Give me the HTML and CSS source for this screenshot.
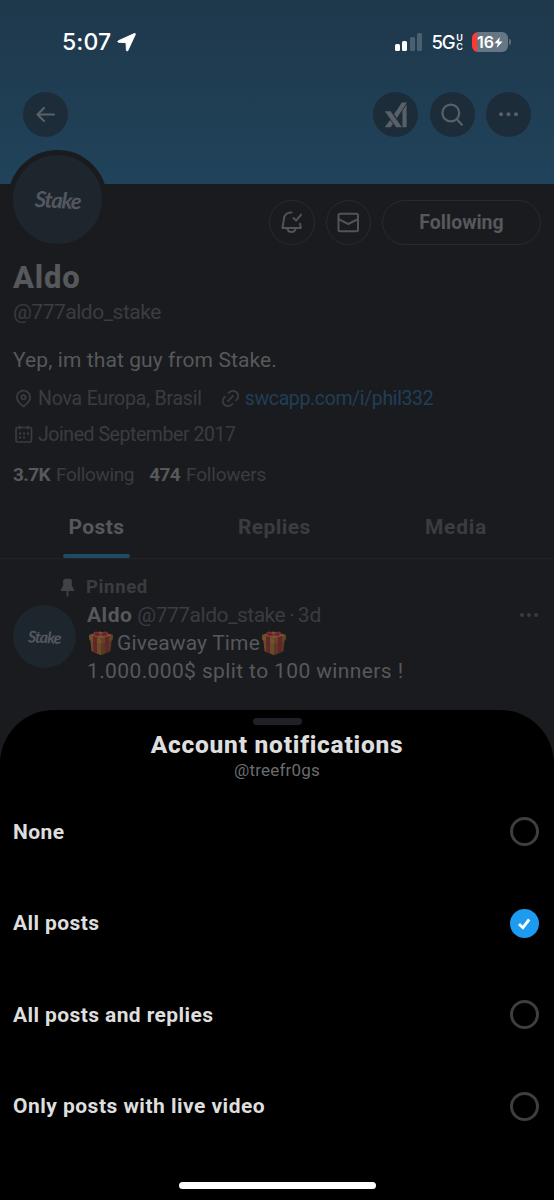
FILE: index.html
```html
<!DOCTYPE html>
<html lang="en">
<head>
<meta charset="utf-8">
<title>Account notifications</title>
<link rel="stylesheet" href="styles.css">
</head>
<body>
<svg class="defs" width="0" height="0">
  <symbol id="gift" viewBox="0 0 26 26">
    <path d="M2.200 9.500 13 13v12.300L3.600 21.200z" fill="#69492a"/>
    <path d="M23.800 9.500 13 13v12.300l9.400-4.100z" fill="#59391f"/>
    <path d="M.8 5 13 8.800V14L1.400 10z" fill="#75502b"/>
    <path d="M25.200 5 13 8.800V14l11.600-4z" fill="#664326"/>
    <path d="M.8 5 12 1.600 25.200 5 13 8.800z" fill="#7b572f"/>
    <path d="m5 6.300 4 1.300v15.800l-3.600-1.500zM21 6.300l-4 1.300v15.800l3.600-1.500z" fill="#61252a"/>
    <path d="M12.500 5.500C9 7.600 5.500 6.200 5.200 4 5 1.600 9.500 0 12.500 4.200 15.500 0 20.500 1.200 20.300 3.800c-.3 2.400-4 3.600-7.800 1.700z" fill="#782e35"/>
    <path d="m7.500 3.800 3 .8M18 3.500l-3 1" stroke="#4c2024" stroke-width="1.300"/>
  </symbol>
</svg>
<main class="screen">
  <header class="banner">
    <div class="status">
      <div class="clock">
        <span class="time">5:07</span>
        <svg class="nav-arrow" viewBox="0 0 20 20"><path d="M18.300.6 1.600 8.100c-1.200.6-1 1.600.3 1.700l7.600.3.400 7.800c.1 1.300 1.200 1.400 1.700.2L19.200 1.700c.4-.9-.1-1.400-.9-1.100z" fill="#fff" stroke="#fff"/></svg>
      </div>
      <div class="indicators">
        <div class="signal"><i class="b1"></i><i class="b2"></i><i class="b3"></i><i class="b4"></i></div>
        <div class="network"><span class="gen">5G</span><span class="uc"><span>U</span><span>C</span></span></div>
        <div class="battery"><span class="level">16</span><svg viewBox="0 0 10 14" width="9" height="13"><path d="M6.600.8.5 7.800h3.700L3 13.200l6.500-7.400H5.600z" fill="#fff"/></svg></div>
        <i class="battery-cap"></i>
      </div>
    </div>
    <nav class="nav">
      <span class="round"><svg width="45" height="45" viewBox="0 0 45 45" class="line"><path d="M31 22.500H14.500M21 16l-6.500 6.500L21 29"/></svg></span>
      <span class="round push"><svg width="45" height="45" viewBox="0 0 45 45" fill="#596068"><path d="M11.800 19.200h5.700l11.500 16h-5.700zM11.800 35.200l5.300-7.200 2.900 4-2.400 3.200zM21 22.300 28.900 10.500h5L23.900 26zM29.500 18.500l4.100-6v22.700h-4.100z"/></svg></span>
      <span class="round"><svg width="45" height="45" viewBox="0 0 45 45" class="line"><circle cx="20.800" cy="21" r="8.400"/><path d="m26.900 27.200 5 5.500"/></svg></span>
      <span class="round"><svg width="45" height="45" viewBox="0 0 45 45" fill="#596068"><circle cx="15" cy="22.300" r="2"/><circle cx="22.500" cy="22.300" r="2"/><circle cx="30" cy="22.300" r="2"/></svg></span>
    </nav>
  </header>

  <section class="profile">
    <div class="profile-top">
      <div class="avatar"><span class="logo">Stake</span></div>
      <div class="actions">
        <span class="outline"><svg width="43" height="43" viewBox="0 0 43 43" class="line soft"><path d="M21.500 11.500c-4-.4-7.300 2.600-7.600 6.300l-1.400 9.200h18.300l-.8-4.200M17.300 27.200c.4 5.200 7.900 5.200 8.300 0M23.500 17l2.600 2.600 5-6"/></svg></span>
        <span class="outline"><svg width="43" height="43" viewBox="0 0 43 43" class="line soft"><rect x="11.500" y="12.700" width="19.500" height="17.500" rx="1.500"/><path d="m11.500 18.200 9.800 4.800 9.700-4.800"/></svg></span>
        <span class="outline pill">Following</span>
      </div>
    </div>
    <h1 class="name">Aldo</h1>
    <div class="handle">@777aldo_stake</div>
    <div class="bio">Yep, im that guy from Stake.</div>
    <div class="meta">
      <svg class="ic" viewBox="0 0 24 24"><path d="M12 7c-1.930 0-3.500 1.570-3.500 3.500S10.070 14 12 14s3.500-1.570 3.500-3.500S13.930 7 12 7zm0 5c-.827 0-1.500-.673-1.500-1.500S11.173 9 12 9s1.500.673 1.500 1.500S12.827 12 12 12zm0-10c-4.687 0-8.500 3.813-8.500 8.500 0 5.967 7.621 11.116 7.945 11.332l.555.370.555-.370c.324-.216 7.945-5.365 7.945-11.332C20.500 5.813 16.687 2 12 2zm0 17.770c-1.665-1.241-6.500-5.196-6.500-9.270C5.500 6.916 8.416 4 12 4s6.500 2.916 6.500 6.500c0 4.073-4.835 8.028-6.500 9.270z"/></svg>
      <span class="place">Nova Europa, Brasil</span>
      <svg class="ic link-ic" viewBox="0 0 24 24"><path d="M18.360 5.640c-1.950-1.960-5.110-1.960-7.070 0L9.880 7.050 8.460 5.640l1.420-1.420c2.730-2.730 7.160-2.730 9.900 0 2.730 2.740 2.730 7.170 0 9.900l-1.420 1.420-1.410-1.420 1.410-1.410c1.960-1.960 1.960-5.120 0-7.070zm-2.120 3.530l-7.070 7.070-1.410-1.410 7.070-7.070 1.410 1.410zm-12.020.710l1.420-1.420 1.410 1.420-1.410 1.410c-1.960 1.960-1.960 5.120 0 7.070 1.950 1.960 5.110 1.960 7.070 0l1.410-1.410 1.420 1.410-1.420 1.420c-2.730 2.730-7.160 2.730-9.900 0-2.730-2.740-2.730-7.170 0-9.900z"/></svg>
      <span class="url">swcapp.com/i/phil332</span>
    </div>
    <div class="meta joined-row">
      <svg class="ic cal" viewBox="0 0 21 21"><rect x="3" y="3.500" width="15.500" height="14.500" rx="1.500"/><path d="M6.800 1.500v4M14.700 1.500v4"/><path class="dots" d="M6 9.500h2M10 9.500h2M14 9.500h2M6 13.500h2M10 13.500h2"/></svg>
      <span class="joined">Joined September 2017</span>
    </div>
    <div class="counts"><b class="n1">3.7K</b><span class="c1">Following</span><b class="n2">474</b><span class="c2">Followers</span></div>
  </section>

  <div class="tabs">
    <span class="tab active">Posts</span>
    <span class="tab replies">Replies</span>
    <span class="tab media">Media</span>
  </div>

  <article class="post">
    <div class="pinned">
      <svg class="pin" viewBox="0 0 24 24"><path d="M7 4.500C7 3.120 8.120 2 9.500 2h5C15.880 2 17 3.120 17 4.500v5.260L20.120 16H13v5l-1 2-1-2v-5H3.880L7 9.760V4.500z"/></svg>
      <span>Pinned</span>
    </div>
    <div class="post-row">
      <div class="avatar small"><span class="logo">Stake</span></div>
      <div class="post-body">
        <div class="post-head"><b>Aldo</b><span class="by">@777aldo_stake</span><span class="dot">·</span><span class="age">3d</span><svg class="more" width="20" height="6" viewBox="0 0 20 6"><circle cx="3" cy="3" r="1.900"/><circle cx="10" cy="3" r="1.900"/><circle cx="17" cy="3" r="1.900"/></svg></div>
        <div class="text"><svg class="gift"><use href="#gift"/></svg><span class="give">Giveaway Time</span><svg class="gift"><use href="#gift"/></svg></div>
        <div class="text split">1.000.000$ split to 100 winners !</div>
      </div>
    </div>
  </article>

  <section class="sheet">
    <i class="grabber"></i>
    <h2>Account notifications</h2>
    <div class="sub">@treefr0gs</div>
    <div class="options">
      <div class="option"><span>None</span><i class="radio"></i></div>
      <div class="option"><span>All posts</span><i class="radio on"><svg width="29" height="29" viewBox="0 0 29 29"><path d="m9 15 3.900 3.700 6.300-8.200" fill="none" stroke="#fff" stroke-width="2.900"/></svg></i></div>
      <div class="option"><span>All posts and replies</span><i class="radio"></i></div>
      <div class="option"><span class="live">Only posts with live video</span><i class="radio"></i></div>
    </div>
    <i class="home"></i>
  </section>
</main>
</body>
</html>
```
FILE: styles.css
```css
* { box-sizing: border-box; }
body { margin: 0; background: #1a1b1e; }
.defs { position: absolute; }
.screen {
  position: relative;
  width: 554px;
  height: 1200px;
  overflow: hidden;
  background: #1a1b1e;
  color: #56585c;
  font-family: Roboto, "Liberation Sans", sans-serif;
  font-size: 21px;
  white-space: nowrap;
}
svg { display: block; flex: none; }
.line { fill: none; stroke: #596068; stroke-width: 2.2; stroke-linecap: round; stroke-linejoin: round; }
.line.soft { stroke: #515357; stroke-width: 2; }

.banner { height: 184px; background: linear-gradient(#1f384b, #20435b); }
.status { display: flex; justify-content: space-between; height: 92px; padding: 28px 43px 0 62px; font-family: Inter, sans-serif; color: #fff; }
.clock, .indicators { display: flex; align-items: center; height: 28px; }
.time { font-size: 23px; font-weight: 500; letter-spacing: .1px; }
.nav-arrow { width: 19px; height: 19px; margin-left: 6px; }
.signal { display: flex; align-items: flex-end; gap: 2.5px; height: 18px; }
.signal i { width: 5px; border-radius: 1.5px; background: #fff; }
.signal .b1 { height: 7px; }
.signal .b2 { height: 10px; }
.signal .b3 { height: 14px; background: #4a6070; }
.signal .b4 { height: 18px; background: #4a6070; }
.network { display: flex; align-items: center; margin-left: 9px; }
.gen { font-size: 18.5px; font-weight: 500; letter-spacing: -1.2px; }
.uc { display: flex; flex-direction: column; font-size: 9px; line-height: 9px; font-weight: 600; margin-left: 2px; }
.battery { display: flex; align-items: center; width: 36px; height: 20px; margin-left: 9px; padding-left: 5px; border-radius: 6px; background: linear-gradient(90deg, #ff3b30 5px, #657784 5px); }
.level { font-size: 16px; font-weight: 600; letter-spacing: -.1px; }
.battery-cap { width: 2px; height: 6px; margin-left: 1px; border-radius: 0 2px 2px 0; background: #5a6d7b; }

.nav { display: flex; gap: 11.4px; padding: 0 23px; }
.round { width: 45px; height: 45px; border-radius: 50%; background: #1c2c39; }
.push { margin-left: auto; }

.profile { padding: 0 13px; }
.profile-top { display: flex; justify-content: space-between; height: 76px; }
.avatar { display: flex; align-items: center; justify-content: center; flex: none; width: 99px; height: 99px; margin: -34px 0 0 -5px; border: 5px solid #1a1b1e; border-radius: 50%; background: #1e262d; color: #54585e; }
.logo { font-family: Lato, sans-serif; font-style: italic; font-weight: 700; font-size: 22px; letter-spacing: -1.2px; transform: rotate(3deg); }
.actions { display: flex; gap: 11px; padding-top: 16px; }
.outline { display: flex; align-items: center; justify-content: center; width: 45.5px; height: 45px; border: 1.5px solid #292a2e; border-radius: 23px; }
.pill { width: 159px; font-size: 19.5px; font-weight: 700; }
.name { margin: 0; font-size: 31px; font-weight: 800; line-height: 35px; letter-spacing: .8px; }
.handle { line-height: 34px; color: #3b3c40; letter-spacing: -.5px; }
.bio { line-height: 30px; margin-top: 16px; letter-spacing: .1px; }
.meta { display: flex; align-items: center; height: 36px; color: #3b3c40; font-size: 19.5px; }
.bio + .meta { margin-top: 5px; }
.ic { width: 21px; height: 21px; fill: #3b3c40; }
.cal { fill: none; stroke: #3b3c40; stroke-width: 1.7; }
.cal .dots { stroke-width: 2; }
.place, .joined, .url { margin-left: 4px; }
.place { letter-spacing: -.2px; }
.joined { letter-spacing: -.44px; }
.link-ic { margin-left: 18px; }
.url { color: #203f57; letter-spacing: -.37px; }
.counts { display: flex; margin-top: 7px; line-height: 31px; font-size: 19px; color: #3b3c40; }
.counts b { color: #56585c; letter-spacing: -.6px; }
.c1, .c2 { margin-left: 6px; letter-spacing: -.35px; }
.c2 { letter-spacing: -.2px; }
.n2 { margin-left: 15px; }

.tabs { display: flex; height: 69px; border-bottom: 1px solid #232428; padding-left: 63px; font-weight: 700; color: #3b3c40; line-height: 75px; }
.tab { letter-spacing: .4px; }
.replies { width: 187px; margin-left: 108px; }
.media { letter-spacing: .7px; }
.tab.active { position: relative; width: 67px; text-align: center; color: #56585c; }
.tab.active::after { content: ""; position: absolute; left: 0; right: 0; bottom: 0; height: 4px; border-radius: 2px; background: #204965; }

.post { padding: 14px 13px 0; }
.pinned { display: flex; align-items: center; height: 28px; padding-left: 44px; gap: 8px; font-size: 18.5px; font-weight: 700; color: #3b3c40; letter-spacing: .65px; }
.pin { width: 21px; height: 21px; fill: #414246; }
.post-row { display: flex; gap: 11px; }
.avatar.small { width: 63px; height: 63px; margin: 4px 0 0; border: 0; }
.small .logo { font-size: 16px; letter-spacing: -.9px; }
.post-body { flex: 1; }
.post-head { display: flex; align-items: center; height: 28px; color: #3b3c40; }
.post-head b { color: #56585c; letter-spacing: .5px; }
.by { margin-left: 5px; letter-spacing: -.5px; }
.dot { margin: 0 3px 0 4px; }
.more { margin-left: auto; margin-right: 2px; fill: #3b3c40; }
.text { display: flex; align-items: center; height: 28px; }
.split { letter-spacing: .38px; }
.gift { width: 28px; height: 26px; }
.give { margin-left: 2px; letter-spacing: .15px; }

.sheet { position: absolute; left: 0; right: 0; top: 710px; bottom: 0; display: flex; flex-direction: column; align-items: center; border-radius: 54px 54px 0 0; background: #000; color: #dedede; }
.grabber { width: 49px; height: 7px; margin-top: 8px; border-radius: 4px; background: #202127; }
.sheet h2 { margin: 3px 0 0; font-size: 24.5px; line-height: 34px; font-weight: 800; letter-spacing: .75px; }
.sub { font-size: 17px; line-height: 17px; color: #6a6c70; letter-spacing: .2px; }
.options { width: 100%; margin-top: 7px; padding: 0 15px 0 13px; }
.option { display: flex; align-items: center; justify-content: space-between; height: 91.5px; font-weight: 700; letter-spacing: .4px; }
.live { letter-spacing: .48px; }
.radio { width: 29px; height: 29px; border: 3px solid #3d3e40; border-radius: 50%; }
.radio.on { border: 0; background: #1d9bf0; }
.home { width: 197px; height: 7px; margin-top: 30px; border-radius: 4px; background: #fff; }
```
